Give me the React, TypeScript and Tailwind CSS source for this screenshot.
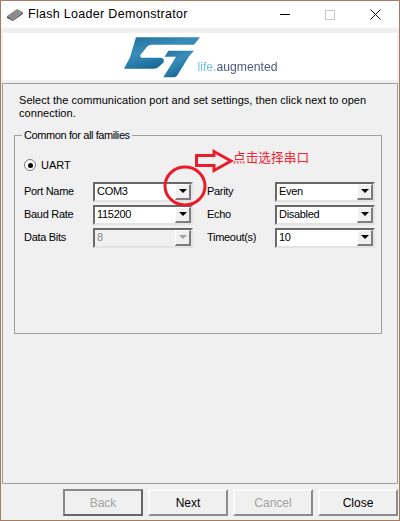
import React from "react";

const font = { fontFamily: '"Liberation Sans", "Noto Sans CJK SC", sans-serif' };

function Combo({ value, disabled }: { value: string; disabled?: boolean }) {
  return (
    <div
      className={`flex h-[20px] w-[100px] items-center justify-between border-2 border-b-[#e3e3e3] border-r-[#e3e3e3] border-l-[#696969] border-t-[#696969] pl-[2px] ${
        disabled ? "bg-[#f0f0f0] text-[#8a8a8a]" : "bg-white text-black"
      }`}
    >
      <span>{value}</span>
      <span className="flex h-[16px] w-[16px] items-center justify-center border-t border-l border-t-white border-l-white border-r-2 border-b-2 border-r-[#7d7d7d] border-b-[#7d7d7d] bg-[#f0f0f0]">
        <span
          className={`h-0 w-0 border-x-[4px] border-t-[4px] border-x-transparent ${
            disabled ? "border-t-[#a0a0a0]" : "border-t-black"
          }`}
        />
      </span>
    </div>
  );
}

function WizardButton({ label, disabled, main }: { label: string; disabled?: boolean; main?: boolean }) {
  return (
    <div
      className={`flex h-[27px] w-[80px] items-center justify-center border-2 text-[12px] ${
        main
          ? "border-t-[#8a8a8a] border-l-[#8a8a8a] border-b-[#666666] border-r-[#666666]"
          : "border-t-[#fbfbfb] border-l-[#fbfbfb] border-b-[#8c8c8c] border-r-[#8c8c8c]"
      } ${disabled ? "text-[#a3a3a3]" : "text-black"}`}
    >
      {label}
    </div>
  );
}

function StLogo() {
  return (
    <svg width="85" height="46" viewBox="0 0 255 138" className="shrink-0 blur-[0.4px]">
      <defs>
        <linearGradient id="st" x1="0" y1="0" x2="0.6" y2="1">
          <stop offset="0" stopColor="#1f6f9b" />
          <stop offset="0.45" stopColor="#3a8db8" />
          <stop offset="0.65" stopColor="#2a7fac" />
          <stop offset="1" stopColor="#135e89" />
        </linearGradient>
      </defs>
      <path
        fill="url(#st)"
        d="M48 10H240L222 32H95C88 32 84 35 80 40L62 62C58 68 62 71 70 71H118C132 71 135 79 129 87L118 97C114 102 108 104 100 104H12L30 70Z"
      />
      <path fill="url(#st)" d="M145 50H222L206 68L172 124C168 129 164 130 158 130H130L168 68H134Z" />
    </svg>
  );
}

export default function App() {
  return (
    <div
      style={font}
      className="flex h-[521px] w-[400px] flex-col overflow-hidden border border-[#a57c5f] bg-[#f0f0f0] text-[11px] text-black"
    >
      {/* Title bar */}
      <div className="flex h-[27px] shrink-0 items-center bg-white pl-[5px] text-[12.5px]">
        <svg width="18" height="14" viewBox="0 0 18 14">
          <path d="M1 8L11 1L17 4L7 12Z" fill="#8c8c8c" />
          <path d="M1 8L7 12V13L1 10Z" fill="#4a4a4a" />
          <path d="M7 12L17 4V6L7 13Z" fill="#5e5e5e" />
        </svg>
        <span className="ml-[4px] w-[252px] tracking-[0.3px]">Flash Loader Demonstrator</span>
        <span className="h-[1px] w-[10px] bg-black" />
        <span className="ml-[35px] h-[10px] w-[10px] border border-[#c8c8c8]" />
        <svg className="ml-[35px]" width="11" height="11" viewBox="0 0 11 11">
          <path d="M0.5 0.5L10.5 10.5M10.5 0.5L0.5 10.5" stroke="#111" fill="none" />
        </svg>
      </div>

      {/* Logo */}
      <div className="mx-[2px] mt-[5px] flex h-[47px] shrink-0 items-center justify-center bg-white pr-[3px]">
        <StLogo />
        <span className="ml-[-7px] mt-[21px] text-[12.2px] leading-none text-[#4d5a82] blur-[0.3px]">
          <span className="text-[#72c5ea]">life.</span>augmented
        </span>
      </div>

      {/* Main panel */}
      <div className="mx-[1px] mt-[3px] flex h-[401px] shrink-0 flex-col border border-[#a0a0a0] px-[11px] pt-[10px]">
        <p className="pl-[5px] leading-[13px] tracking-[0.05px]">
          Select the communication port and set settings, then click next to open connection.
        </p>
        <fieldset className="relative mt-[9px] h-[205px] w-[368px] border border-[#a0a0a0] pl-[9px]">
          <legend className="ml-[-2px] px-[2px] leading-[13px] tracking-[-0.4px]">Common for all families</legend>
          <div className="mt-[15px] flex items-center">
            <span className="flex h-[12px] w-[12px] items-center justify-center rounded-full border border-[#777777] bg-white">
              <span className="h-[5px] w-[5px] rounded-full bg-black" />
            </span>
            <span className="ml-[5px]">UART</span>
          </div>
          <div className="mt-[8px] grid grid-cols-[69px_100px_14px_68px_100px] items-center gap-y-[3px] tracking-[-0.3px]">
            <span>Port Name</span>
            <Combo value="COM3" />
            <span />
            <span>Parity</span>
            <Combo value="Even" />
            <span>Baud Rate</span>
            <Combo value="115200" />
            <span />
            <span>Echo</span>
            <Combo value="Disabled" />
            <span>Data Bits</span>
            <Combo value="8" disabled />
            <span />
            <span>Timeout(s)</span>
            <Combo value="10" />
          </div>
        </fieldset>
      </div>

      {/* Wizard buttons */}
      <div className="mt-[5px] flex gap-[5px] pl-[62px]">
        <WizardButton label="Back" disabled main />
        <WizardButton label="Next" />
        <WizardButton label="Cancel" disabled />
        <WizardButton label="Close" />
      </div>

      {/* Red annotation drawn over the window */}
      <svg className="absolute left-[160px] top-[145px]" width="80" height="65" viewBox="0 0 80 65">
        <ellipse cx="25" cy="41" rx="20" ry="19" fill="none" stroke="#ea1c2a" strokeWidth="3" />
        <path d="M36.5 10.5H54V6.5L71 16L54 25.5V20.5H36.5Z" fill="none" stroke="#ea1c2a" strokeWidth="3" />
      </svg>
      <span className="absolute left-[233px] top-[150px] text-[12.7px] leading-[16px] text-[#ee2532]">点击选择串口</span>
    </div>
  );
}
